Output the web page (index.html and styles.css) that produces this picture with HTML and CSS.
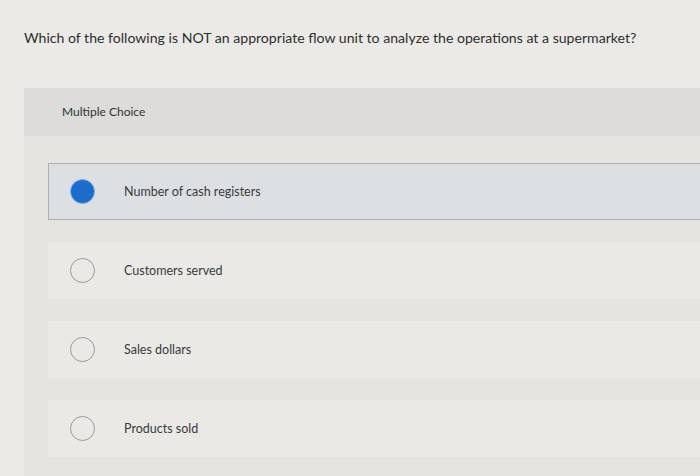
FILE: index.html
```html
<!DOCTYPE html>
<html>
<head>
<meta charset="utf-8">
<link rel="stylesheet" href="styles.css">
</head>
<body>
<div class="page">
  <div class="question">Which of the following is NOT an appropriate flow unit to analyze the operations at a supermarket?</div>
  <div class="panel">
    <div class="label">Multiple Choice</div>
    <div class="options">
      <div class="option selected"><span class="radio"></span><span class="text">Number of cash registers</span></div>
      <div class="option"><span class="radio"></span><span class="text">Customers served</span></div>
      <div class="option"><span class="radio"></span><span class="text">Sales dollars</span></div>
      <div class="option"><span class="radio"></span><span class="text">Products sold</span></div>
    </div>
  </div>
</div>
</body>
</html>
```
FILE: styles.css
```css
html, body {
  margin: 0;
  padding: 0;
}
body {
  background: #ebeae7;
  font-family: Lato, "Open Sans", sans-serif;
  color: #2e2e30;
  width: 700px;
  height: 476px;
  overflow: hidden;
}
.page {
  display: flex;
  flex-direction: column;
}
.question {
  height: 88px;
  box-sizing: border-box;
  padding: 29px 0 0 24px;
  font-size: 14.1px;
  line-height: 18px;
}
.panel {
  margin-left: 24px;
  background: #e5e4e1;
  height: 388px;
}
.label {
  height: 48px;
  box-sizing: border-box;
  background: #dddcda;
  padding: 16px 0 0 38px;
  font-size: 12px;
  line-height: 16px;
  color: #333;
}
.options {
  display: flex;
  flex-direction: column;
  gap: 22px;
  padding-top: 27px;
}
.option {
  margin-left: 24px;
  height: 57px;
  box-sizing: border-box;
  border-top: 1px solid transparent;
  border-bottom: 1px solid transparent;
  border-left: 1px solid transparent;
  display: flex;
  align-items: center;
  padding-left: 21px;
  background: #eae9e6;
}
.option.selected {
  background: #dde0e2;
  border-color: #adb1b4;
}
.radio {
  width: 25px;
  height: 25px;
  box-sizing: border-box;
  border-radius: 50%;
  border: 1.5px solid #9a9a9a;
  background: transparent;
  flex: none;
}
.selected .radio {
  background: #1b6ccb;
  border: 1px solid #7fb0e6;
}
.text {
  margin-left: 29px;
  font-size: 12.5px;
  color: #3a3a3c;
}
```
